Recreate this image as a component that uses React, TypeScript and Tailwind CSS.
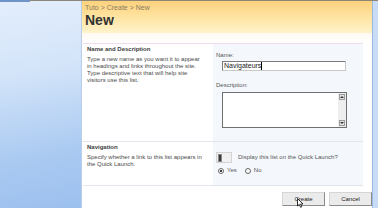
import React from "react";

export default function App() {
  return (
    <div className="w-[378px] h-[208px] overflow-hidden flex bg-white font-['Liberation_Sans',Arial,sans-serif] text-[#333] relative">
      <div className="absolute top-0 left-0 w-full h-[1px] bg-[#8d8676]" />
      <div className="absolute top-0 left-0 w-[30px] h-[2px] bg-[#6f93c9]" />
      {/* sidebar */}
      <div className="w-[82px] h-full bg-[linear-gradient(170deg,#e3eefc_0%,#d3e4f9_35%,#bdd6f5_55%,#a9c9f1_75%,#9cc0ee_100%)] border-r border-[#b9cfe9]" />
      {/* main */}
      <div className="w-[290px] h-full flex flex-col">
        <div className="h-[33px] bg-[linear-gradient(180deg,#fdd07a_0%,#fee3a0_50%,#fff3cc_100%)] pl-[3px] pt-[4px]">
          <div className="text-[7px] leading-[8px] text-[#8a7a5c]">Tuto &gt; Create &gt; New</div>
          <div className="text-[14px] leading-[14px] font-bold text-[#333] mt-[1px]">New</div>
        </div>
        <div className="h-[10px] bg-gradient-to-b from-[#fffaf0] to-white" />
        <div className="flex flex-col w-[280px] ml-[1px]">
          {/* section 1 */}
          <div className="flex border-t border-[#f2dcea] h-[98px]">
            <div className="w-[130px] pl-[4px] pt-[2px]">
              <div className="text-[6px] leading-[7px] font-bold text-[#3c3c3c]">Name and Description</div>
              <div className="text-[6px] leading-[7px] text-[#4a4a4a] mt-[3px] whitespace-nowrap">
                Type a new name as you want it to appear
                <br />
                in headings and links throughout the site.
                <br />
                Type descriptive text that will help site
                <br />
                visitors use this list.
              </div>
            </div>
            <div className="w-[150px] bg-[#f4f8fd] pl-[3px] pt-[8px]">
              <div className="text-[6px] leading-[7px] text-[#555]">Name:</div>
              <div className="ml-[6px] mt-[2px] w-[124px] h-[10px] bg-white border border-[#7b7b7b] border-b-[#c8c8c8] border-r-[#c8c8c8] flex items-center pl-[1px]">
                <span className="text-[7px] leading-[8px] text-[#222]">Navigateurs</span>
                <span className="w-[1px] h-[8px] bg-black" />
              </div>
              <div className="text-[6px] leading-[7px] text-[#555] mt-[11px]">Description:</div>
              <div className="ml-[6px] mt-[3px] w-[125px] h-[36px] bg-white border border-[#6f6f6f] flex justify-end">
                <div className="w-[8px] h-full bg-[#eeeeee] flex flex-col justify-between p-[1px]">
                  <div className="h-[6px] bg-[#e4e4e4] border border-[#9a9a9a] flex items-center justify-center">
                    <div className="w-0 h-0 border-l-[2px] border-r-[2px] border-b-[2px] border-l-transparent border-r-transparent border-b-[#333]" />
                  </div>
                  <div className="h-[6px] bg-[#e4e4e4] border border-[#9a9a9a] flex items-center justify-center">
                    <div className="w-0 h-0 border-l-[2px] border-r-[2px] border-t-[2px] border-l-transparent border-r-transparent border-t-[#333]" />
                  </div>
                </div>
              </div>
            </div>
          </div>
          {/* section 2 */}
          <div className="flex border-t border-b border-[#e1e6ee] h-[45px]">
            <div className="w-[130px] pl-[4px] pt-[2px]">
              <div className="text-[6px] leading-[7px] font-bold text-[#3c3c3c]">Navigation</div>
              <div className="text-[6px] leading-[7px] text-[#4a4a4a] mt-[3px] whitespace-nowrap">
                Specify whether a link to this list appears in
                <br />
                the Quick Launch.
              </div>
            </div>
            <div className="w-[150px] bg-[#f4f8fd] pl-[3px] pt-[10px]">
              <div className="flex items-center">
                <div className="w-[16px] h-[11px] border border-[#d4d4d4] bg-[#f0f0f0] flex items-center pl-[1px]">
                  <div className="w-[4px] h-[8px] bg-[#3a3a3a] border border-[#888]" />
                </div>
                <span className="ml-[6px] text-[6px] leading-[7px] text-[#555]">Display this list on the Quick Launch?</span>
              </div>
              <div className="flex items-center mt-[4px] ml-[2px] text-[6px] leading-[7px] text-[#555]">
                <span className="w-[6px] h-[6px] rounded-full border border-[#666] bg-white flex items-center justify-center">
                  <span className="w-[2px] h-[2px] rounded-full bg-black" />
                </span>
                <span className="ml-[3px]">Yes</span>
                <span className="ml-[8px] w-[6px] h-[6px] rounded-full border border-[#666] bg-white" />
                <span className="ml-[3px]">No</span>
              </div>
            </div>
          </div>
          {/* buttons */}
          <div className="flex justify-end gap-[4px] mt-[6px] mr-[-9px]">
            <div className="relative w-[43px] h-[14px] bg-[#ebebeb] border border-[#8c8c8c] border-t-[#d6d6d6] border-l-[#d6d6d6] flex items-center justify-center text-[6px] text-[#222]">
              Create
              <svg className="absolute left-[14px] top-[5px]" width="7" height="10" viewBox="0 0 7 10">
                <path d="M0.5 0.5 L0.5 8 L2.3 6.4 L3.6 9.3 L4.8 8.8 L3.6 6 L6 6 Z" fill="white" stroke="black" strokeWidth="0.8" />
              </svg>
            </div>
            <div className="w-[43px] h-[14px] bg-[#ebebeb] border border-[#8c8c8c] border-t-[#d6d6d6] border-l-[#d6d6d6] flex items-center justify-center text-[6px] text-[#222]">
              Cancel
            </div>
          </div>
        </div>
      </div>
      {/* right strip */}
      <div className="w-[6px] h-full bg-[#c8dcf5] border-l border-[#9bb9e0]" />
    </div>
  );
}
